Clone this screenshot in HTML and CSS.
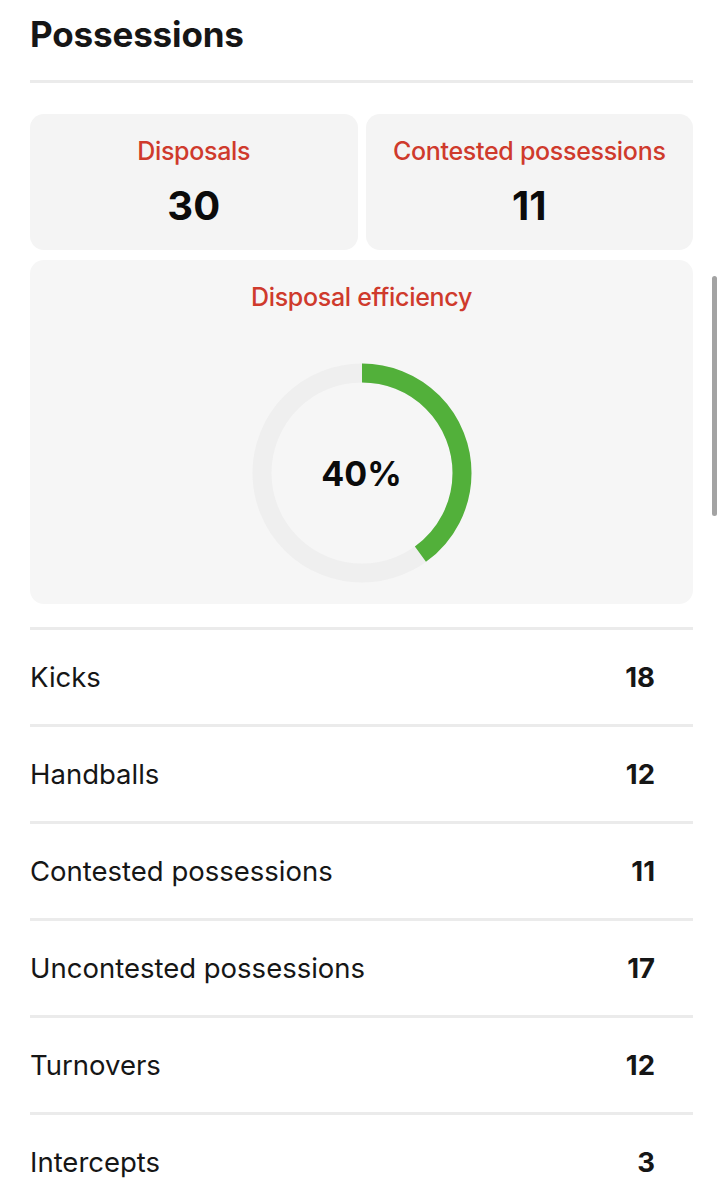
FILE: index.html
```html
<!DOCTYPE html>
<html lang="en">
<head>
<meta charset="utf-8">
<title>Possessions</title>
<link rel="stylesheet" href="styles.css">
</head>
<body>
<main class="page">
  <h1 class="title">Possessions</h1>
  <div class="rule"></div>
  <section class="tiles">
    <div class="tile">
      <div class="tile-label">Disposals</div>
      <div class="tile-value">30</div>
    </div>
    <div class="tile">
      <div class="tile-label">Contested possessions</div>
      <div class="tile-value">11</div>
    </div>
    <div class="tile tile-wide">
      <div class="tile-label">Disposal efficiency</div>
      <div class="donut">
        <svg class="donut-svg" viewBox="0 0 220 220" width="220" height="220">
          <circle cx="110" cy="110" r="100" fill="none" stroke="#efefef" stroke-width="19"/>
          <circle cx="110" cy="110" r="100" fill="none" stroke="#52b03a" stroke-width="19"
            stroke-dasharray="251.33 1000" transform="rotate(-90 110 110)"/>
        </svg>
        <div class="donut-text">40%</div>
      </div>
    </div>
  </section>
  <ul class="stats">
    <li class="stat"><span class="stat-name">Kicks</span><span class="stat-val">18</span></li>
    <li class="stat"><span class="stat-name">Handballs</span><span class="stat-val">12</span></li>
    <li class="stat"><span class="stat-name">Contested possessions</span><span class="stat-val">11</span></li>
    <li class="stat"><span class="stat-name">Uncontested possessions</span><span class="stat-val">17</span></li>
    <li class="stat"><span class="stat-name">Turnovers</span><span class="stat-val">12</span></li>
    <li class="stat"><span class="stat-name">Intercepts</span><span class="stat-val">3</span></li>
  </ul>
</main>
<div class="scrollbar"></div>
</body>
</html>
```

FILE: styles.css
```css
html, body {
  margin: 0;
  padding: 0;
  background: #ffffff;
}
body {
  font-family: Inter, "Noto Sans", sans-serif;
  color: #111111;
  overflow: hidden;
}
.page {
  padding: 0 30px;
}
.title {
  margin: 0;
  padding-top: 12px;
  height: 66px;
  box-sizing: border-box;
  font-size: 35px;
  font-weight: 700;
  letter-spacing: -0.15px;
  color: #161616;
  line-height: 44px;
}
.rule {
  height: 3px;
  background: #ebebeb;
  margin-top: 14px;
}
.tiles {
  margin-top: 31px;
  display: grid;
  grid-template-columns: 1fr 1fr;
  gap: 10px 8px;
}
.tile {
  background: #f4f4f4;
  border-radius: 14px;
  height: 136px;
  display: flex;
  flex-direction: column;
  align-items: center;
  box-sizing: border-box;
  padding-top: 22px;
}
.tile-wide {
  grid-column: 1 / 3;
  height: 344px;
  background: #f6f6f6;
}
.tile-label {
  color: #cf3a2c;
  font-size: 25px;
  font-weight: 500;
  line-height: 30px;
  letter-spacing: -0.3px;
}
.tile-value {
  margin-top: 18px;
  font-size: 40px;
  font-weight: 700;
  line-height: 44px;
  color: #0b0b0b;
}
.donut {
  position: relative;
  margin-top: 51px;
  width: 220px;
  height: 220px;
}
.donut-svg {
  display: block;
}
.donut-text {
  position: absolute;
  inset: 0;
  display: flex;
  align-items: center;
  justify-content: center;
  font-size: 34px;
  font-weight: 700;
  color: #0b0b0b;
}
.stats {
  list-style: none;
  margin: 23px 0 0;
  padding: 0;
}
.stat {
  border-top: 3px solid #ebebeb;
  height: 97px;
  box-sizing: border-box;
  display: flex;
  align-items: center;
  justify-content: space-between;
  padding-right: 38px;
  font-size: 27.5px;
}
.stat-name {
  font-weight: 400;
  color: #161616;
}
.stat-val {
  font-weight: 700;
  color: #161616;
}
.scrollbar {
  position: absolute;
  left: 712px;
  top: 276px;
  width: 5px;
  height: 240px;
  border-radius: 3px;
  background: #a3a3a3;
}
```
